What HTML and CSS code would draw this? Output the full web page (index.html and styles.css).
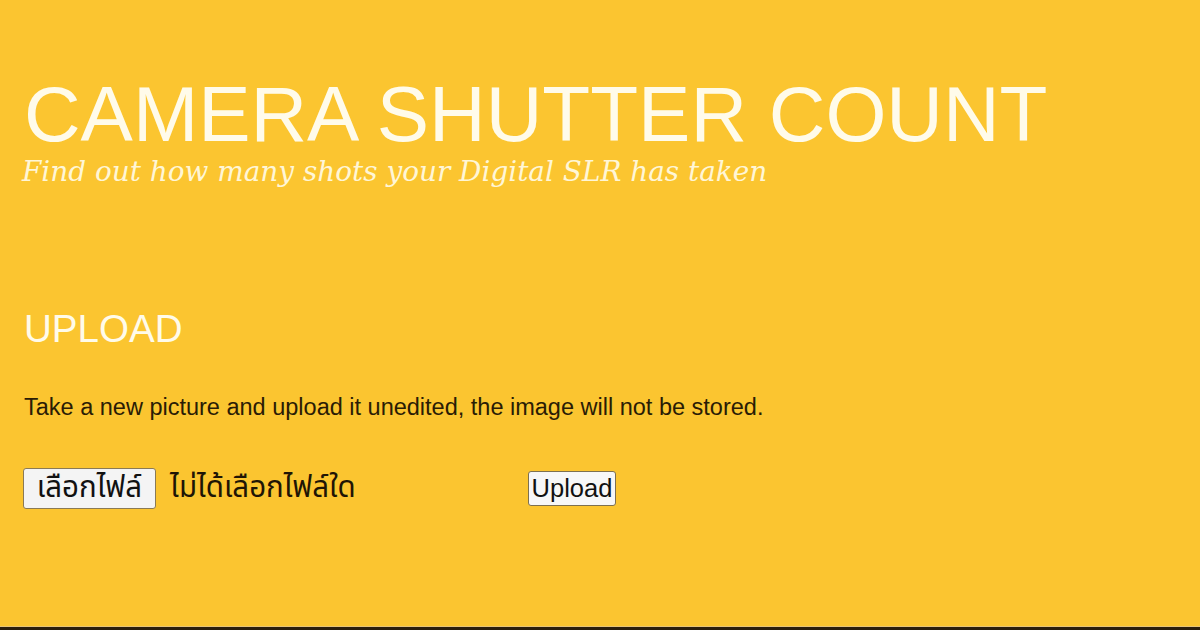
FILE: index.html
```html
<!DOCTYPE html>
<html>
<head>
<meta charset="utf-8">
<link rel="stylesheet" href="styles.css">
</head>
<body>
<div class="page">
  <header class="masthead">
    <h1 class="title">CAMERA SHUTTER COUNT</h1>
    <p class="tagline">Find out how many shots your Digital SLR has taken</p>
  </header>
  <section class="upload">
    <h2 class="upload-title">UPLOAD</h2>
    <p class="upload-text">Take a new picture and upload it unedited, the image will not be stored.</p>
    <form class="upload-form">
      <div class="file-field">
        <span class="file-btn">เลือกไฟล์</span>
        <span class="file-status">ไม่ได้เลือกไฟล์ใด</span>
      </div>
      <span class="submit-btn">Upload</span>
    </form>
  </section>
</div>
<div class="bottom-edge"></div>
</body>
</html>
```
FILE: styles.css
```css
html, body {
  margin: 0;
  padding: 0;
}
body {
  background: #fbc530;
  width: 1200px;
  height: 630px;
  overflow: hidden;
  display: flex;
  flex-direction: column;
  font-family: "Liberation Sans", Arial, sans-serif;
}
.page {
  flex: 1;
  padding: 71px 0 0 24px;
}
.title {
  margin: 0;
  font-family: "Liberation Sans", Arial, sans-serif;
  font-weight: normal;
  font-size: 78.4px;
  line-height: 86px;
  color: #fffbea;
}
.tagline {
  margin: 3px 0 0 -2px;
  font-family: "DejaVu Serif", "Liberation Serif", serif;
  font-style: italic;
  font-size: 27.9px;
  line-height: 24px;
  color: #fff6d6;
}
.upload {
  padding-top: 123px;
}
.upload-title {
  margin: 0;
  font-weight: normal;
  font-size: 38.6px;
  line-height: 44px;
  color: #fffbea;
}
.upload-text {
  margin: 42px 0 0;
  font-size: 23.5px;
  line-height: 28px;
  color: #2a1c05;
}
.upload-form {
  margin-top: 47px;
  display: flex;
  align-items: center;
}
.file-field {
  display: flex;
  align-items: center;
  gap: 12px;
  width: 504px;
  margin-left: -1px;
}
.file-btn {
  box-sizing: border-box;
  height: 41px;
  width: 133px;
  justify-content: center;
  display: flex;
  align-items: center;
  background: #f4f4f4;
  border: 1px solid #8a7a55;
  border-radius: 3px;
  font-family: "Noto Sans Thai", "Leelawadee UI", Tahoma, "DejaVu Sans", sans-serif;
  font-size: 29.5px;
  line-height: 1;
  color: #111;
}
.file-status {
  font-family: "Noto Sans Thai", "Leelawadee UI", Tahoma, "DejaVu Sans", sans-serif;
  font-size: 29.5px;
  line-height: 1;
  color: #1f1505;
  margin-left: 2px;
}
.submit-btn {
  box-sizing: border-box;
  height: 35px;
  width: 88px;
  justify-content: center;
  display: flex;
  align-items: center;
  background: #f7f7f7;
  border: 1px solid #7d7050;
  border-radius: 3px;
  font-family: "Liberation Sans", Arial, sans-serif;
  font-size: 25.5px;
  color: #111;
  margin-left: 1px;
}
.bottom-edge {
  height: 3px;
  background: #2b1f0c;
  border-top: 1px solid #e9c676;
}
```
